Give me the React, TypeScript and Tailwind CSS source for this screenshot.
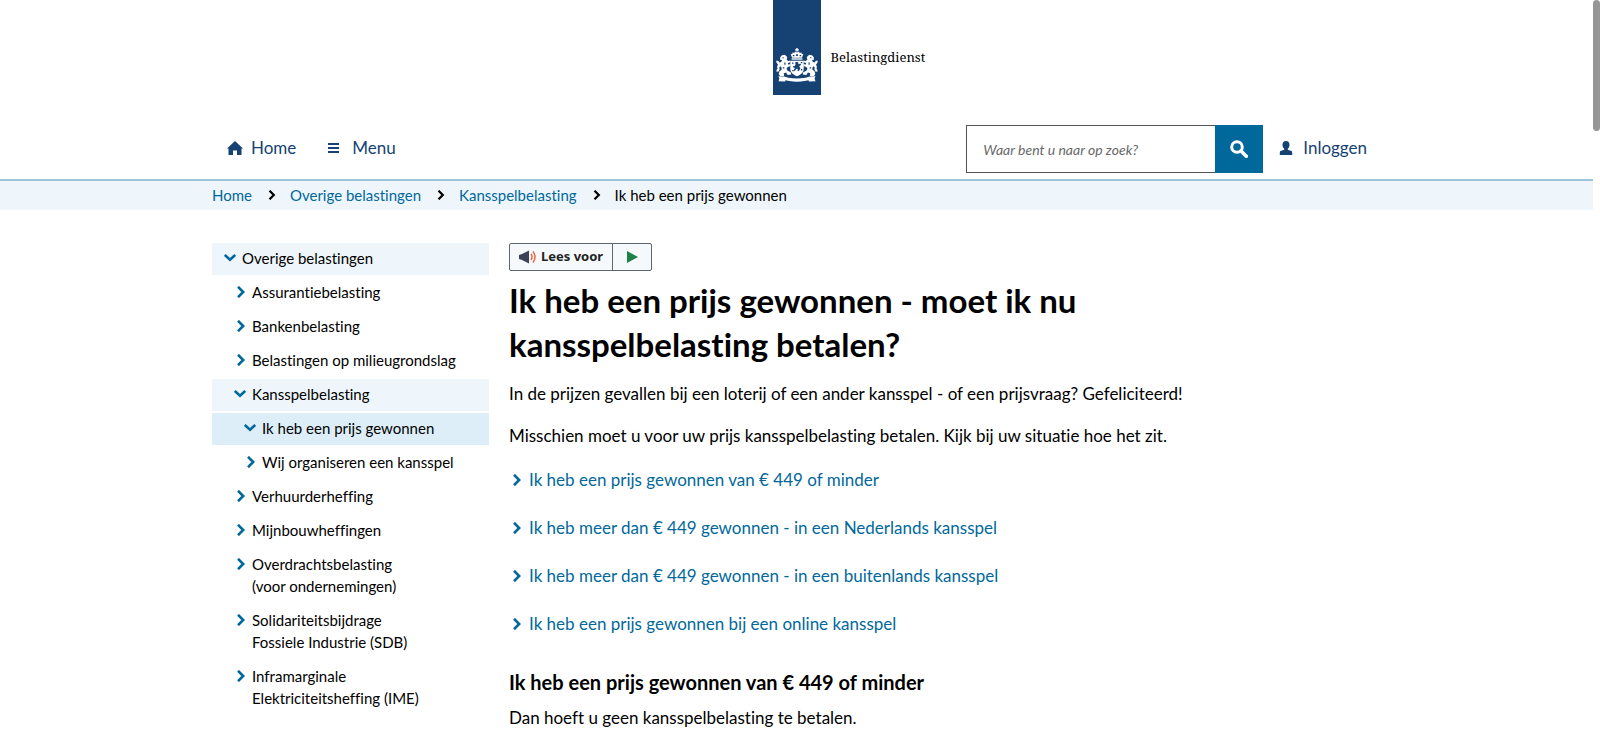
import React, { useState } from 'react';

type MenuItem = {
  label: string;
  level: 0 | 1 | 2;
  open?: boolean;
  current?: boolean;
};

const menuItems: MenuItem[] = [
  { label: 'Overige belastingen', level: 0, open: true },
  { label: 'Assurantiebelasting', level: 1 },
  { label: 'Bankenbelasting', level: 1 },
  { label: 'Belastingen op milieugrondslag', level: 1 },
  { label: 'Kansspelbelasting', level: 1, open: true },
  { label: 'Ik heb een prijs gewonnen', level: 2, open: true, current: true },
  { label: 'Wij organiseren een kansspel', level: 2 },
  { label: 'Verhuurderheffing', level: 1 },
  { label: 'Mijnbouwheffingen', level: 1 },
  { label: 'Overdrachtsbelasting (voor ondernemingen)', level: 1 },
  { label: 'Solidariteitsbijdrage Fossiele Industrie (SDB)', level: 1 },
  { label: 'Inframarginale Elektriciteitsheffing (IME)', level: 1 },
];

const situations = [
  'Ik heb een prijs gewonnen van € 449 of minder',
  'Ik heb meer dan € 449 gewonnen - in een Nederlands kansspel',
  'Ik heb meer dan € 449 gewonnen - in een buitenlands kansspel',
  'Ik heb een prijs gewonnen bij een online kansspel',
];

const crumbs = ['Home', 'Overige belastingen', 'Kansspelbelasting'];

const indent = ['pl-3', 'pl-[22px]', 'pl-8'];

function ChevronRight({ className }: { className?: string }) {
  return (
    <svg viewBox="0 0 8 12" className={className} fill="none" stroke="currentColor" strokeWidth="2.6" aria-hidden="true">
      <path d="M1 .8l5.200 5.200L1 11.200" />
    </svg>
  );
}

function ChevronDown({ className }: { className?: string }) {
  return (
    <svg viewBox="0 0 12 8" className={className} fill="none" stroke="currentColor" strokeWidth="2.6" aria-hidden="true">
      <path d="M.8 1l5.2 4.8L11.2 1" />
    </svg>
  );
}

function CoatOfArms() {
  return (
    <svg viewBox="0 0 42 34" className="w-[42px] h-[34px]" fill="#fff" aria-hidden="true">
      {/* crown */}
      <path d="M20.300 0h1.400v1.200h1.200v1.200h-1.200v1.200h-1.400V2.400h-1.200V1.200h1.200z" />
      <path d="M16 9.800L14.600 5.800l1.500.4.500-1.800 1.700.6.700-1.400L21 4.600l2-1 .7 1.400 1.700-.6.500 1.800 1.500-.4L26 9.800z" />
      <path d="M16.800 7h1.600v1.300h-1.600zM20.100 6.200h1.800v1.800h-1.800zM23.600 7h1.600v1.300h-1.600z" fill="#154273" />
      <path d="M15.600 10.300h10.800v1.400H15.600z" />
      {/* shield */}
      <path d="M14.300 12.700h13.400v8.300c0 3.600-3.300 6-6.700 7.300-3.400-1.300-6.700-3.700-6.700-7.300z" />
      <path
        d="M16 14.500h1.500v1.300H16zM24.800 14h1.500v1.300h-1.500zM16.200 22h1.400v1.300h-1.400zM25 21h1.300v1.400H25zM19.200 14.200l2-.5 1.500 1.200-.8 1.400 2.300-.6 1 1.100-2 1.400 1.300 2.300-1.900 2.700-1.300-.6.700-1.900-1.900.3-1.300 2.200-1.200-1 1.400-2.300-1.700-.5-.3-1.700 1.600.6.900-1.500z"
        fill="#154273"
      />
      {/* lions */}
      <path
        id="lion"
        d="M4.200 9.200L6 7.200l2.400-.4 2 1.200.9 2-.8 1.400 1.600 1.500 2-.4.300 1.800-2.500.8.200 1.400 2.300-.2.200 1.800-2.800.8-1.300 1.800 1.200 2 3 1.600.6 2.300-3.700.3-1.500-2.400-2.300.8.300 2.600H4l-1.300-1.800.8-2.900 2.200-1.800-.3-2.200-1.200-1-.9 1.200.3 1.900-1 2.300-2 .2-.1-1.800 1-1.200-.4-2.200.9-1.900L.2 14l.5-1.500L2.400 13l.9 1.500 1.800-.5.900-1.900-1.900-.4z"
      />
      <path d="M6.500 9.300h1.300v1H6.500zM8.300 14.500h1.200v2.300H8.300zM6.800 19.300h1.500v1.300H6.800z" fill="#154273" />
      <use href="#lion" transform="matrix(-1 0 0 1 42 0)" />
      <path d="M34.200 9.300h1.300v1h-1.300zM32.500 14.500h1.200v2.300h-1.200zM33.700 19.300h1.500v1.300h-1.500z" fill="#154273" />
      {/* ribbon */}
      <path d="M2.500 28.300l5.800.3 4 1.200c5.800 1 11.600 1 17.400 0l4-1.200 5.800-.3-.9 2.400.9 2.600-6.500.3-.6-1.300-3.700.8c-5.100.8-10.300.8-15.400 0l-3.700-.8-.6 1.300-6.500-.3.900-2.600z" />
    </svg>
  );
}

function App() {
  const [query, setQuery] = useState('');

  return (
    <div className="bg-white text-black font-[Lato,'Noto_Sans',sans-serif] [font-variant-ligatures:none] pr-[7px]">
      <header>
        {/* Logo */}
        <div className="grid grid-cols-[1fr_48px_1fr]">
          <div />
          <div className="h-[95px] bg-[#154273] flex items-end justify-center pb-[13px]">
            <CoatOfArms />
          </div>
          <div className="pl-2.5 pt-[46px] text-[13px] leading-[22px] font-['Noto_Serif','Liberation_Serif',serif]">Belastingdienst</div>
        </div>

        {/* Main navigation */}
        <div className="max-w-[1169px] mx-auto h-[84px] pt-[30px] flex items-start justify-between">
          <nav className="flex items-center h-[46px] pl-[15px] text-[17px] text-[#154273]">
            <a href="#" className="flex items-center">
              <svg viewBox="0 0 16 14" className="w-4 h-3.5 mr-2" fill="currentColor" aria-hidden="true">
                <path d="M8 0l8 7.500h-1.500V14H10V9.500H6V14H1.500V7.500H0z" />
              </svg>
              Home
            </a>
            <button type="button" className="flex items-center ml-8">
              <svg viewBox="0 0 12 12" className="w-3 h-3 mr-3" fill="currentColor" aria-hidden="true">
                <path d="M0 1h11v2H0zM0 5h11v2H0zM0 9h11v2H0z" />
              </svg>
              Menu
            </button>
          </nav>

          <div className="flex items-start">
            <form className="flex" onSubmit={e => e.preventDefault()}>
              <input
                type="text"
                aria-label="Zoeken"
                placeholder="Waar bent u naar op zoek?"
                value={query}
                onChange={e => setQuery(e.target.value)}
                className="w-[249px] h-12 px-4 border border-r-0 border-[#535353] text-sm placeholder:italic placeholder:text-[#696969] outline-none"
              />
              <button type="submit" aria-label="Zoek" className="w-12 h-12 bg-[#01689b] text-white flex items-center justify-center">
                <svg viewBox="0 0 18 18" className="w-[18px] h-[18px]" fill="none" stroke="currentColor" aria-hidden="true">
                  <circle cx="7" cy="7" r="5.300" strokeWidth="3" />
                  <path d="M11 11l5.300 5.300" strokeWidth="3.600" strokeLinecap="round" />
                </svg>
              </button>
            </form>
            <a href="#" className="flex items-center h-[46px] ml-4 pr-3.5 text-[17px] text-[#154273]">
              <svg viewBox="0 0 14 14" className="w-3.5 h-3.5 mr-2.5" fill="currentColor" aria-hidden="true">
                <path d="M7 0c2.300 0 3.500 1.500 3.500 3.700 0 1.800-.7 3.300-1.700 4v1l3.600 1.300c.6.300.8.800.8 1.500V14H.8v-2.500c0-.7.200-1.200.8-1.500l3.600-1.300v-1c-1-.7-1.700-2.200-1.700-4C3.500 1.500 4.700 0 7 0z" />
              </svg>
              Inloggen
            </a>
          </div>
        </div>
      </header>

      {/* Breadcrumb */}
      <nav aria-label="Kruimelpad" className="border-t-2 border-[#9bc3da] bg-[#eef6fb]">
        <ol className="max-w-[1169px] mx-auto h-[29px] pb-px flex items-center text-[15px]">
          {crumbs.map(crumb => (
            <li key={crumb} className="flex items-center">
              <a href="#" className="text-[#01689b]">{crumb}</a>
              <ChevronRight className="w-2 h-2.5 ml-4 mr-3.5" />
            </li>
          ))}
          <li>Ik heb een prijs gewonnen</li>
        </ol>
      </nav>

      <div className="max-w-[1169px] mx-auto pt-[33px] flex items-start gap-5">
        {/* Side menu */}
        <nav aria-label="Submenu" className="w-[277px] shrink-0">
          <ul className="flex flex-col gap-0.5">
            {menuItems.map(item => (
              <li key={item.label} className={item.current ? 'bg-[#ddeef8]' : item.open ? 'bg-[#eef6fb]' : ''}>
                <a href="#" className={`flex items-start pt-1 pb-1.5 pr-16 text-[15px] leading-[22px] ${indent[item.level]}`}>
                  <span className="w-[18px] h-[22px] shrink-0 flex items-center text-[#01689b]">
                    {item.open ? <ChevronDown className="w-3 h-2" /> : <ChevronRight className="w-2 h-3 ml-[3px]" />}
                  </span>
                  <span className={item.label.includes('(') ? '' : 'whitespace-nowrap'}>{item.label}</span>
                </a>
              </li>
            ))}
          </ul>
        </nav>

        <main className="max-w-[680px]">
          <div className="flex w-fit h-7 border border-[#5f6670] rounded-xs bg-[#f5f9fc] text-[13px] font-bold text-[#222] font-['Noto_Sans',sans-serif]">
            <button type="button" className="flex items-center px-[9px] border-r border-[#5f6670]">
              <svg viewBox="0 0 18 14" className="w-[18px] h-3.5 mr-1" aria-hidden="true">
                <path d="M0 5l3-1L10 .5v13L3 10 0 9z" fill="#3d4158" />
                <path d="M12 4q2 3 0 6M14 1.500q4 5.500 0 11" fill="none" stroke="#ec6a42" strokeWidth="1.500" />
              </svg>
              Lees voor
            </button>
            <button type="button" aria-label="Afspelen" className="w-[38px] flex items-center justify-center">
              <svg viewBox="0 0 12 12" className="w-3 h-3" aria-hidden="true">
                <path d="M1 0l11 6-11 6z" fill="#1d8046" />
              </svg>
            </button>
          </div>

          <h1 className="mt-[7px] text-[33px] leading-[44px] font-bold">
            Ik heb een prijs gewonnen - moet ik nu kansspelbelasting betalen?
          </h1>
          <p className="mt-3.5 text-[17px] leading-7">
            In de prijzen gevallen bij een loterij of een ander kansspel - of een prijsvraag? Gefeliciteerd!
          </p>
          <p className="mt-3.5 text-[17px] leading-7">
            Misschien moet u voor uw prijs kansspelbelasting betalen. Kijk bij uw situatie hoe het zit.
          </p>
          <ul className="mt-4 flex flex-col gap-5 text-[17px] leading-7 text-[#01689b]">
            {situations.map(text => (
              <li key={text}>
                <a href="#" className="flex items-center">
                  <ChevronRight className="w-2 h-3 ml-1 mr-2" />
                  {text}
                </a>
              </li>
            ))}
          </ul>
          <h2 className="mt-[30px] text-xl leading-7 font-bold">Ik heb een prijs gewonnen van € 449 of minder</h2>
          <p className="mt-2 text-[17px] leading-7">Dan hoeft u geen kansspelbelasting te betalen.</p>
        </main>
      </div>

      {/* Scrollbar thumb */}
      <div className="fixed top-0 right-0 w-[7px] h-[131px] rounded-full bg-[#969696]" />
    </div>
  );
}

export default App;
